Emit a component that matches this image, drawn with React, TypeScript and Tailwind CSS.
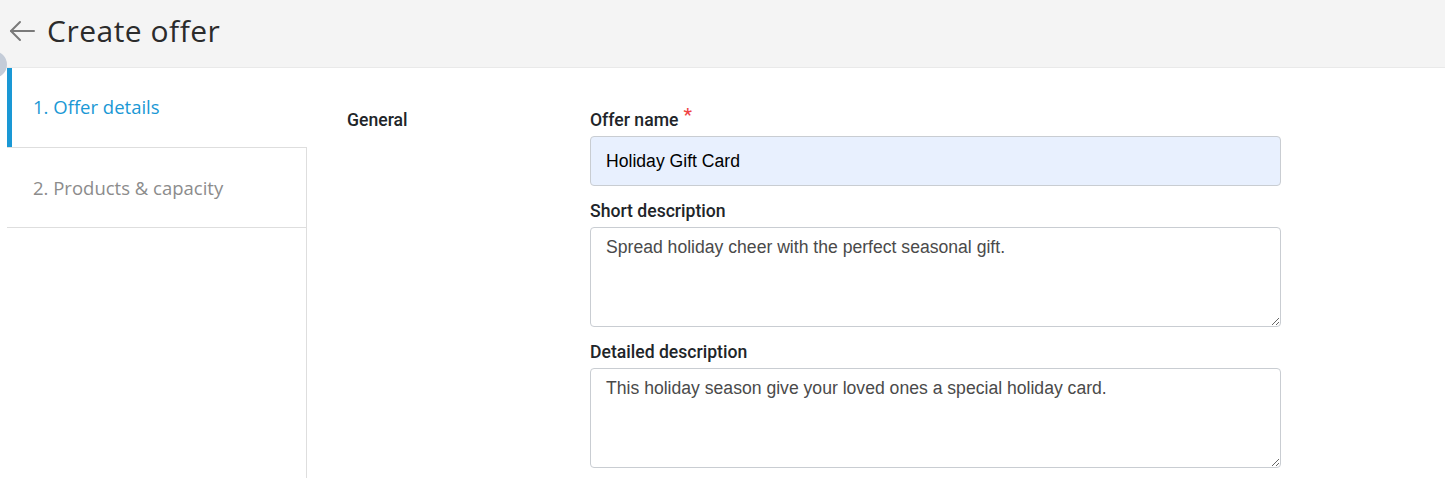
import { useState } from 'react';

const heading = { fontFamily: '"Open Sans", "DejaVu Sans", sans-serif' };
const labelFont = { fontFamily: 'Roboto, "Liberation Sans", sans-serif' };
const inputFont = { fontFamily: '"Liberation Sans", Arial, sans-serif' };

const steps = [
  { name: '1. Offer details' },
  { name: '2. Products & capacity' },
];

const BackArrow = () => (
  <svg width="28" height="24" viewBox="0 0 28 24" fill="none" stroke="#7a7a7a" strokeWidth="2" strokeLinecap="round" strokeLinejoin="round">
    <path d="M26 12H3" />
    <path d="M12 3L3 12l9 9" />
  </svg>
);

const Field = ({ label, required, children }: { label: string; required?: boolean; children: React.ReactNode }) => (
  <div className="flex flex-col">
    <label className="text-[17.6px] leading-[26px] font-medium text-[#212529] mb-[3px]" style={labelFont}>
      {label}
      {required && <span className="text-[#ef4444] ml-[5px] text-[19px] leading-none align-top relative top-[-2px]">*</span>}
    </label>
    {children}
  </div>
);

export default function App() {
  const [name, setName] = useState('Holiday Gift Card');
  const [short, setShort] = useState('Spread holiday cheer with the perfect seasonal gift.');
  const [detail, setDetail] = useState('This holiday season give your loved ones a special holiday card.');

  return (
    <div className="relative w-full h-[478px] overflow-hidden bg-white">
      <header className="h-[68px] bg-[#f4f4f4] border-b border-[#e9e9e9] flex items-center pl-[8px] pb-[6px]">
        <BackArrow />
        <h1 className="ml-[11px] text-[30px] text-[#2b2b2b] tracking-[0.5px]" style={heading}>
          Create offer
        </h1>
      </header>

      <div className="absolute left-[-20px] top-[51px] w-[27px] h-[27px] rounded-full bg-[#c4ccd8]" />

      <div className="flex h-[410px]">
        <nav className="w-[300px] ml-[7px] flex flex-col" style={heading}>
          {steps.map((s, i) =>
            i === 0 ? (
              <div key={s.name} className="relative z-10 h-[79px] border-l-[5px] border-[#1a98d5] pl-[21px] flex items-center pb-[2px] text-[18.5px] font-medium text-[#1a98d5]">
                {s.name}
              </div>
            ) : (
              <div key={s.name} className="h-[81px] border-y border-r border-[#dedede] pl-[26px] flex items-center text-[18.5px] font-medium text-[#8c8c8c]">
                {s.name}
              </div>
            )
          )}
          <div className="flex-1 border-r border-[#dedede]" />
        </nav>

        <main className="flex-1 pl-[40px] pt-[39px] flex">
          <div className="w-[243px] text-[17.6px] leading-[26px] font-medium text-[#212529]" style={labelFont}>
            General
          </div>
          <div className="w-[691px] flex flex-col gap-[12px]">
            <Field label="Offer name" required>
              <input
                value={name}
                onChange={(e) => setName(e.target.value)}
                className="h-[50px] px-[15px] rounded-[4px] border border-[#c9cdd2] bg-[#e8f0fe] text-[17.6px] text-black outline-none"
                style={inputFont}
              />
            </Field>
            <Field label="Short description">
              <textarea
                value={short}
                onChange={(e) => setShort(e.target.value)}
                className="h-[100px] px-[15px] pt-[7px] rounded-[4px] border border-[#c9cdd2] text-[17.6px] leading-[24px] text-[#4a4a4a] outline-none"
                style={inputFont}
              />
            </Field>
            <Field label="Detailed description">
              <textarea
                value={detail}
                onChange={(e) => setDetail(e.target.value)}
                className="h-[100px] px-[15px] pt-[7px] rounded-[4px] border border-[#c9cdd2] text-[17.6px] leading-[24px] text-[#4a4a4a] outline-none"
                style={inputFont}
              />
            </Field>
          </div>
        </main>
      </div>
    </div>
  );
}
